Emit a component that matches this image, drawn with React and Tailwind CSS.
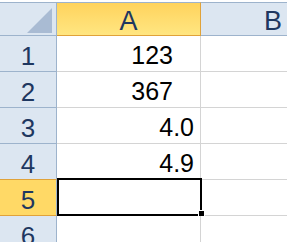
// Spreadsheet fragment: corner, column headers A/B, rows 1-6
const rows = [
  { n: 1, v: "123", pad: "pr-[27px]" },
  { n: 2, v: "367", pad: "pr-[27px]" },
  { n: 3, v: "4.0", pad: "pr-[6px]" },
  { n: 4, v: "4.9", pad: "pr-[6px]" },
  { n: 5, v: "", pad: "", selected: true },
  { n: 6, v: "", pad: "" },
];

export default function App() {
  return (
    <div
      className="w-[287px] h-[242px] overflow-hidden bg-white pt-[2px]"
      style={{ fontFamily: '"Liberation Sans", Arial, sans-serif' }}
    >
      <div className="grid grid-cols-[57px_144px_144px] w-[345px]">
        {/* header row */}
        <div className="relative h-[34px] bg-[#dce6f1] border-t border-b border-r border-[#9db3cc]">
          <svg className="absolute left-[27px] top-[5px]" width="26" height="26" viewBox="0 0 26 26">
            <polygon points="25,0 25,25 0,25" fill="#a9bbd3" />
          </svg>
        </div>
        <div className="h-[34px] pt-[4px] flex items-center justify-center text-[27px] text-[#1e3760] bg-gradient-to-b from-[#ffd35c] to-[#ffe681] border-t border-t-[#9db3cc] border-b border-b-[#e0a23a] border-r border-r-[#e0a23a]">
          A
        </div>
        <div className="h-[34px] pt-[4px] flex items-center justify-center text-[27px] text-[#1e3760] bg-[#dce6f1] border-t border-b border-[#9db3cc]">
          B
        </div>

        {rows.map((r) => (
          <div key={r.n} className="contents">
            <div
              className={
                r.selected
                  ? "h-[37px] -mt-px pt-[5px] flex items-center justify-center text-[26px] text-[#1e3760] bg-[#ffd966] border-t border-t-[#e0a23a] border-b border-b-[#e0a23a] border-r border-r-[#9db3cc]"
                  : "h-[36px] pt-[5px] flex items-center justify-center text-[26px] text-[#1e3760] bg-[#dce6f1] border-b border-r border-[#9db3cc]"
              }
            >
              {r.n}
            </div>
            <div
              className={
                "relative pt-[5px] flex items-center justify-end text-[25px] text-black border-b border-r border-[#d4d4d4] " +
                r.pad +
                (r.selected ? " -mt-px h-[37px]" : " h-[36px]")
              }
            >
              {r.v}
              {r.selected && (
                <>
                  <div className="absolute left-0 top-[-1px] w-[145px] h-[38px] border-2 border-black" />
                  <div className="absolute left-[141px] top-[31px] w-[7px] h-[7px] bg-black border border-white" />
                </>
              )}
            </div>
            <div className={"border-b border-[#d4d4d4]" + (r.selected ? " -mt-px h-[37px]" : " h-[36px]")} />
          </div>
        ))}
      </div>
    </div>
  );
}
